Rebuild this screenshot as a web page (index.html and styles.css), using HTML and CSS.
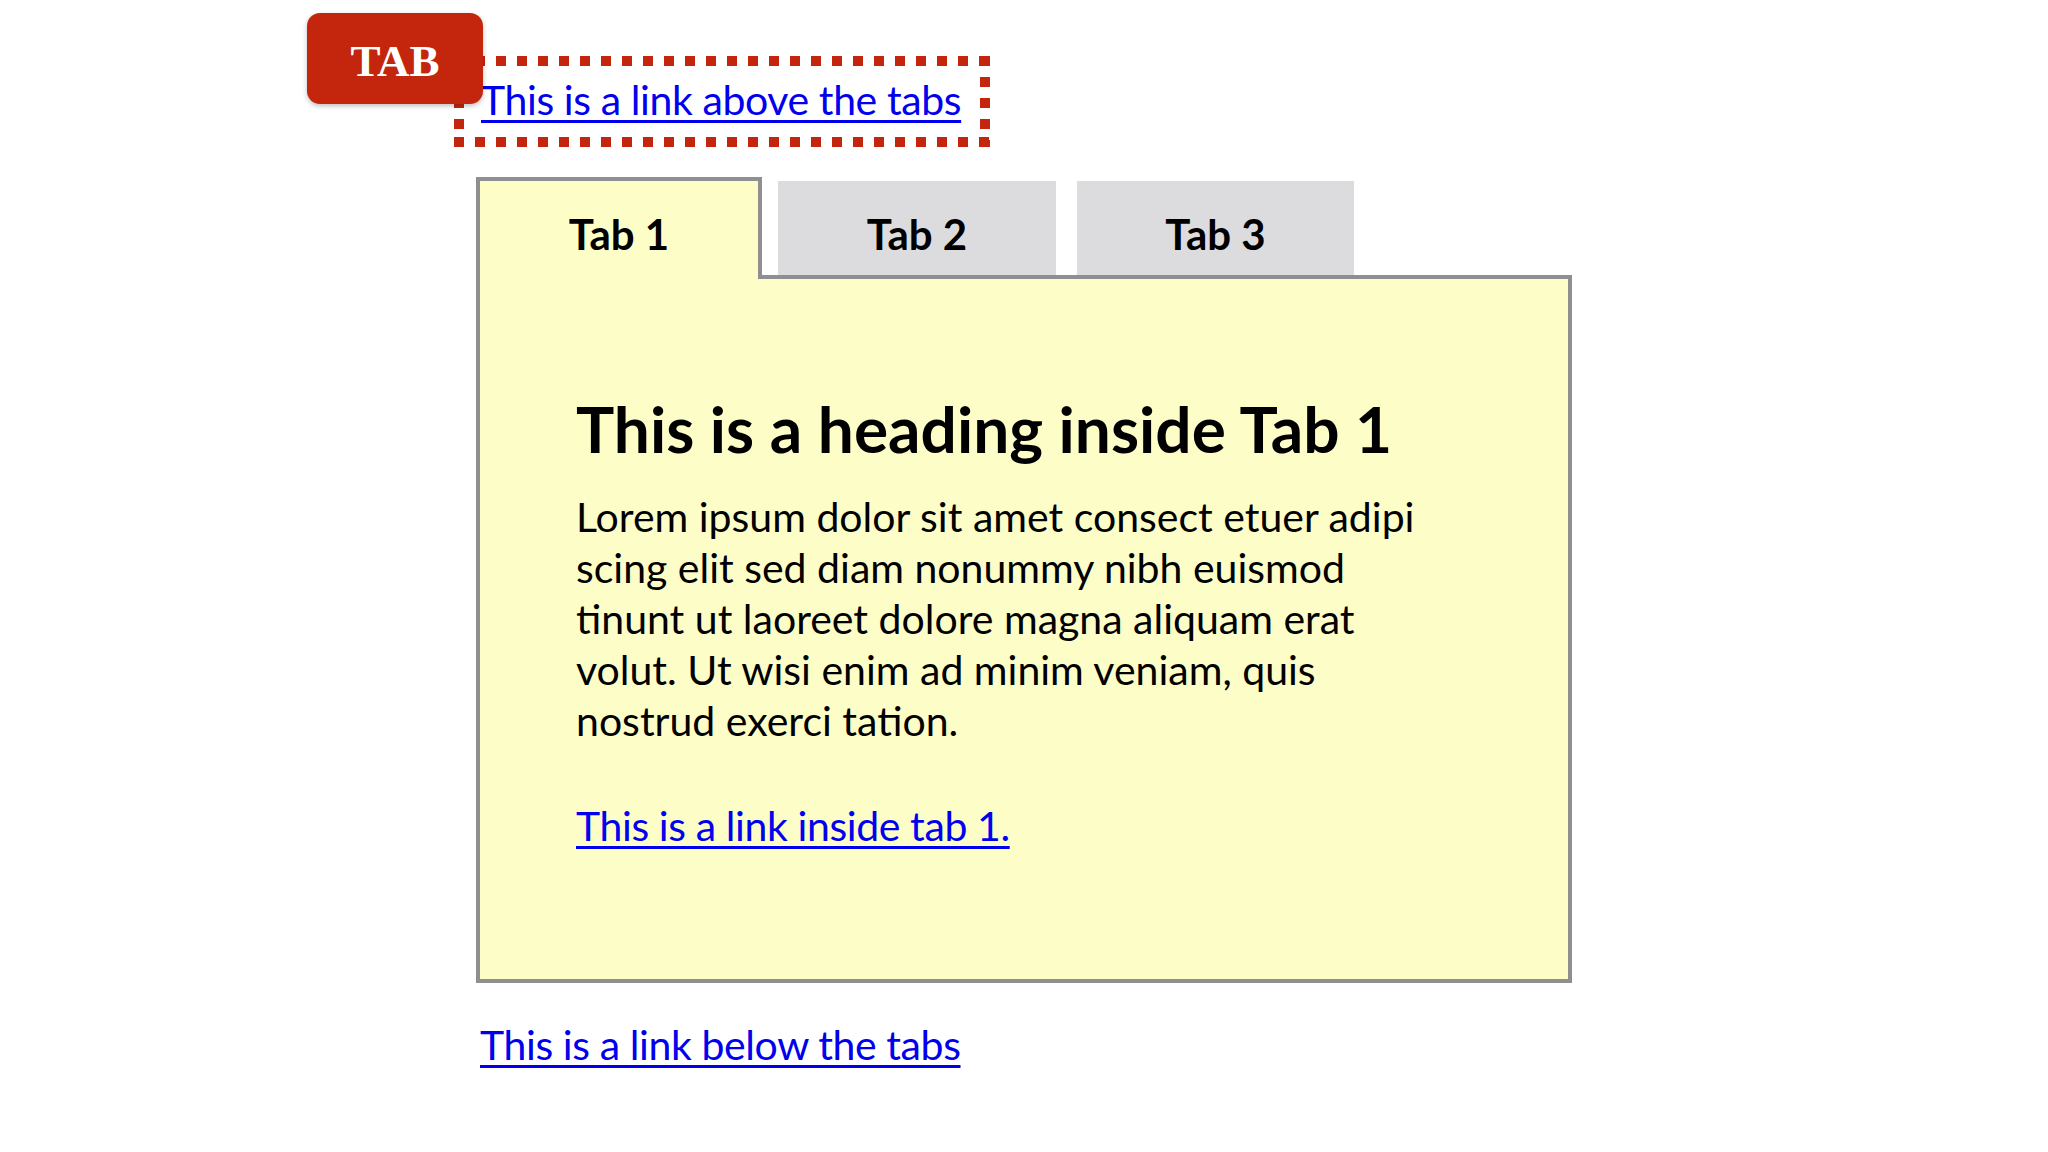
FILE: index.html
```html
<!DOCTYPE html>
<html lang="en">
<head>
<meta charset="utf-8">
<title>Tabs</title>
<link rel="stylesheet" href="styles.css">
</head>
<body>
<main class="page">
  <div class="top">
    <span class="badge">TAB</span>
    <a class="link focus-link" href="#">This is a link above the tabs</a>
  </div>

  <div class="tabs">
    <div class="tablist" role="tablist">
      <button class="tab tab-active" role="tab" aria-selected="true">Tab 1</button>
      <button class="tab tab-2" role="tab" aria-selected="false">Tab 2</button>
      <button class="tab tab-3" role="tab" aria-selected="false">Tab 3</button>
    </div>
    <section class="panel" role="tabpanel">
      <h2 class="panel-title">This is a heading inside Tab 1</h2>
      <p class="panel-text">Lorem ipsum dolor sit amet consect etuer adipi scing elit sed diam nonummy nibh euismod tinunt ut laoreet dolore magna aliquam erat volut. Ut wisi enim ad minim veniam, quis nostrud exerci tation.</p>
      <p class="panel-more"><a class="link" href="#">This is a link inside tab 1.</a></p>
    </section>
  </div>

  <p class="below"><a class="link" href="#">This is a link below the tabs</a></p>
</main>
</body>
</html>
```
FILE: styles.css
```css
html, body {
  margin: 0;
  background: #ffffff;
}

body {
  font-family: Lato, "Open Sans", sans-serif;
  color: #000000;
}

.page {
  padding: 56px 0 0 476px;
}

.link {
  color: #0000ee;
  text-decoration: underline;
  text-decoration-thickness: 3px;
  text-underline-offset: 5px;
  font-size: 41px;
  letter-spacing: -0.4px;
}

/* ---- top row: badge + focused link ---- */
.top {
  position: relative;
  height: 121px;
  display: flex;
  align-items: flex-start;
}

.badge {
  position: absolute;
  left: -169px;
  top: -43px;
  z-index: 2;
  width: 176px;
  height: 91px;
  box-sizing: border-box;
  display: flex;
  align-items: center;
  justify-content: center;
  background: #c4260d;
  border-radius: 13px;
  box-shadow: 0 2px 5px rgba(0, 0, 0, 0.25);
  color: #ffffff;
  font-family: "Liberation Serif", "Times New Roman", serif;
  font-weight: 700;
  font-size: 45px;
  padding-top: 4px;
}

.focus-link {
  position: relative;
  display: inline-block;
  line-height: 44px;
  margin-left: -22px;
  padding: 22px 29px 25px 27px;
}

/* square-dotted focus ring */
.focus-link::after {
  content: "";
  position: absolute;
  inset: 0;
  pointer-events: none;
  background:
    repeating-linear-gradient(90deg, #c4260d 0 10px, transparent 10px 21px) left top / 100% 10px no-repeat,
    repeating-linear-gradient(90deg, #c4260d 0 10px, transparent 10px 21px) left bottom / 100% 10px no-repeat,
    repeating-linear-gradient(180deg, #c4260d 0 10px, transparent 10px 21px) left top / 10px 100% no-repeat,
    repeating-linear-gradient(180deg, #c4260d 0 10px, transparent 10px 21px) right top / 10px 100% no-repeat;
}

/* ---- tabs ---- */
.tabs {
  width: 1096px;
}

.tablist {
  display: flex;
  align-items: flex-end;
  height: 98px;
}

.tab {
  box-sizing: border-box;
  display: flex;
  justify-content: center;
  align-items: flex-start;
  margin: 0;
  border: 0;
  padding: 32px 0 0;
  font-family: inherit;
  font-weight: 700;
  font-size: 42px;
  line-height: 1;
  color: #000000;
  background: #dcdcde;
  height: 94px;
  cursor: pointer;
}

.tab-active {
  position: relative;
  z-index: 1;
  width: 286px;
  height: 102px;
  margin-bottom: -4px;
  border: 4px solid #8f8f92;
  border-bottom: 0;
  background: #fdfdc8;
}

.tab-2 {
  width: 278px;
  margin-left: 16px;
}

.tab-3 {
  width: 277px;
  margin-left: 21px;
}

.panel {
  box-sizing: border-box;
  height: 708px;
  border: 4px solid #8f8f92;
  background: #fdfdc8;
  padding: 119px 96px 0 96px;
}

.panel-title {
  margin: 0;
  font-weight: 700;
  font-size: 64px;
  line-height: 62px;
}

.panel-text {
  margin: 31px 0 0;
  font-size: 41px;
  line-height: 51px;
  max-width: 880px;
}

.panel-more {
  margin: 54px 0 0;
  line-height: 51px;
}

.below {
  margin: 36px 0 0 4px;
  line-height: 51px;
}
```
